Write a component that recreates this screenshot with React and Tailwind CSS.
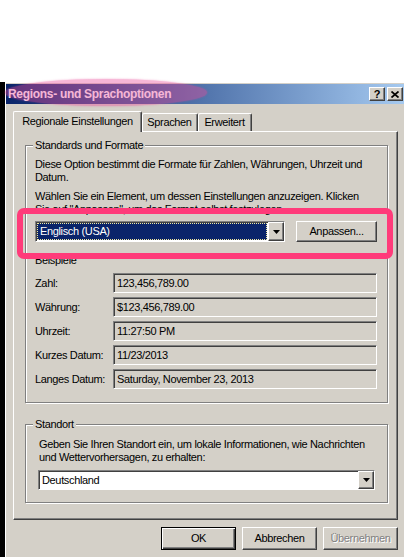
const raised =
  "border border-t-white border-l-white border-r-[#404040] border-b-[#404040] shadow-[inset_-1px_-1px_0_#808080] bg-[#d4d0c8]";
const sunken =
  "border border-t-[#808080] border-l-[#808080] border-r-white border-b-white shadow-[inset_1px_1px_0_#404040]";
const etched = "border border-[#808080] shadow-[inset_1px_1px_0_#ffffff,1px_1px_0_#ffffff]";

function Arrow() {
  return (
    <svg width="7" height="4" viewBox="0 0 7 4">
      <path d="M0 0H7L3.5 4Z" fill="#000" />
    </svg>
  );
}

function DropBtn() {
  return (
    <div className={`${raised} w-[16px] h-full flex items-center justify-center shrink-0`}>
      <Arrow />
    </div>
  );
}

function Field({ children }) {
  return (
    <div className={`${sunken} w-[264px] h-[20px] flex items-center pl-[3px] whitespace-nowrap`}>
      {children}
    </div>
  );
}

function Row({ label, value }) {
  return (
    <div className="flex items-center h-[20px]">
      <div className="w-[78px] whitespace-nowrap">{label}</div>
      <Field>{value}</Field>
    </div>
  );
}

function Button({ children, def, disabled }) {
  if (def) {
    return (
      <div className="w-[75px] h-[23px] border border-black bg-[#d4d0c8] shadow-[inset_1px_1px_0_#ffffff,inset_-1px_-1px_0_#404040,inset_-2px_-2px_0_#808080] flex items-center justify-center">
        {children}
      </div>
    );
  }
  return (
    <div
      className={`${raised} w-[75px] h-[23px] flex items-center justify-center ${
        disabled ? "text-[#808080] [text-shadow:1px_1px_0_#ffffff]" : ""
      }`}
    >
      {children}
    </div>
  );
}

export default function App() {
  return (
    <div className="relative w-[404px] h-[557px] overflow-hidden bg-white font-['Liberation_Sans',Arial,sans-serif] text-[11px] leading-[13px] tracking-[-0.35px] text-black">
      <div className="h-[82px]" />
      <div className="flex h-[475px]">
        <div className="w-[5px] shrink-0 bg-black" />
        <div className="w-[400px] shrink-0 bg-[#d4d0c8] border-l border-t border-white pt-[1px]">
          {/* title bar */}
          <div className="flex h-[20px] items-center bg-linear-to-r from-[#0a246a] to-[#a6caf0]">
            <span className="pl-[2px] text-[12px] font-bold text-white tracking-[-0.3px] whitespace-nowrap">
              Regions- und Sprachoptionen
            </span>
            <div className="ml-auto mr-[2px] flex gap-[2px]">
              <div className={`${raised} w-[16px] h-[14px] flex items-center justify-center text-[11px] font-bold leading-none tracking-normal`}>
                ?
              </div>
              <div className={`${raised} w-[16px] h-[14px] flex items-center justify-center`}>
                <svg width="8" height="7" viewBox="0 0 8 7">
                  <path d="M0.5 0.5L7.5 6.5M7.5 0.5L0.5 6.5" stroke="#000" strokeWidth="1.7" />
                </svg>
              </div>
            </div>
          </div>

          <div className="pl-[7px] pt-[7px]">
            {/* tabs */}
            <div className="flex items-end h-[20px]">
              <div className="relative z-10 mb-[-1px] h-[21px] w-[129px] bg-[#d4d0c8] border-l border-t border-white border-r border-r-[#404040] shadow-[inset_-1px_0_0_#808080] rounded-t-[2px] flex items-center justify-center pb-[2px] whitespace-nowrap">
                Regionale Einstellungen
              </div>
              <div className="h-[18px] w-[56px] border-t border-white border-r border-r-[#404040] shadow-[inset_-1px_0_0_#808080,inset_1px_0_0_#ffffff] rounded-t-[2px] flex items-center justify-center whitespace-nowrap">
                Sprachen
              </div>
              <div className="h-[18px] w-[54px] border-t border-white border-r border-r-[#404040] shadow-[inset_-1px_0_0_#808080,inset_1px_0_0_#ffffff] rounded-t-[2px] flex items-center justify-center whitespace-nowrap">
                Erweitert
              </div>
            </div>

            {/* panel */}
            <div className="w-[385px] h-[389px] border border-t-white border-l-white border-r-[#404040] border-b-[#404040] shadow-[inset_-1px_-1px_0_#808080] pl-[11px] pt-[13px]">
              {/* Standards und Formate */}
              <div className={`relative ${etched} w-[363px] h-[258px] pl-[9px] pt-[12px]`}>
                <span className="absolute left-[7px] top-[-7px] bg-[#d4d0c8] px-[2px] whitespace-nowrap">
                  Standards und Formate
                </span>
                <p className="whitespace-nowrap">
                  Diese Option bestimmt die Formate für Zahlen, Währungen, Uhrzeit und
                  <br />
                  Datum.
                </p>
                <p className="mt-[6px] whitespace-nowrap">
                  Wählen Sie ein Element, um dessen Einstellungen anzuzeigen. Klicken
                  <br />
                  Sie auf "Anpassen", um das Format selbst festzulegen.
                </p>
                <div className="mt-[5px] flex h-[21px] gap-[11px]">
                  <div className={`${sunken} w-[250px] h-[21px] flex bg-white`}>
                    <div className="flex-1 p-[1px]">
                      <div className="h-full bg-[#0a246a] border border-dotted border-[#f0e8a0] text-white flex items-center pl-[2px] whitespace-nowrap">
                        Englisch (USA)
                      </div>
                    </div>
                    <DropBtn />
                  </div>
                  <div className={`${raised} w-[81px] h-[21px] flex items-center justify-center whitespace-nowrap`}>
                    Anpassen...
                  </div>
                </div>
                <div className="mt-[12px] whitespace-nowrap">Beispiele</div>
                <div className="mt-[6px] flex flex-col gap-[4px]">
                  <Row label="Zahl:" value="123,456,789.00" />
                  <Row label="Währung:" value="$123,456,789.00" />
                  <Row label="Uhrzeit:" value="11:27:50 PM" />
                  <Row label="Kurzes Datum:" value="11/23/2013" />
                  <Row label="Langes Datum:" value="Saturday, November 23, 2013" />
                </div>
              </div>

              {/* Standort */}
              <div className={`relative ${etched} mt-[21px] w-[363px] h-[79px] pl-[12px] pt-[13px]`}>
                <span className="absolute left-[7px] top-[-7px] bg-[#d4d0c8] px-[2px] whitespace-nowrap">
                  Standort
                </span>
                <p className="pl-[1px] whitespace-nowrap">
                  Geben Sie Ihren Standort ein, um lokale Informationen, wie Nachrichten
                  <br />
                  und Wettervorhersagen, zu erhalten:
                </p>
                <div className={`${sunken} mt-[6px] w-[337px] h-[20px] flex bg-white`}>
                  <div className="flex-1 flex items-center pl-[3px] whitespace-nowrap">Deutschland</div>
                  <DropBtn />
                </div>
              </div>
            </div>

            {/* buttons */}
            <div className="w-[385px] mt-[7px] flex justify-end gap-[6px]">
              <Button def>OK</Button>
              <Button>Abbrechen</Button>
              <Button disabled>Übernehmen</Button>
            </div>
          </div>
        </div>
      </div>

      {/* annotation overlays */}
      <div className="pointer-events-none absolute left-[5px] top-[79px] w-[202px] h-[27px] rounded-[50%] bg-[rgba(236,72,153,0.4)] shadow-[0_0_2px_rgba(236,72,153,0.5)]" />
      <div className="pointer-events-none absolute left-[17px] top-[208px] w-[376px] h-[51px] rounded-[7px] border-[6px] border-[#ff3b7a]" />
    </div>
  );
}
